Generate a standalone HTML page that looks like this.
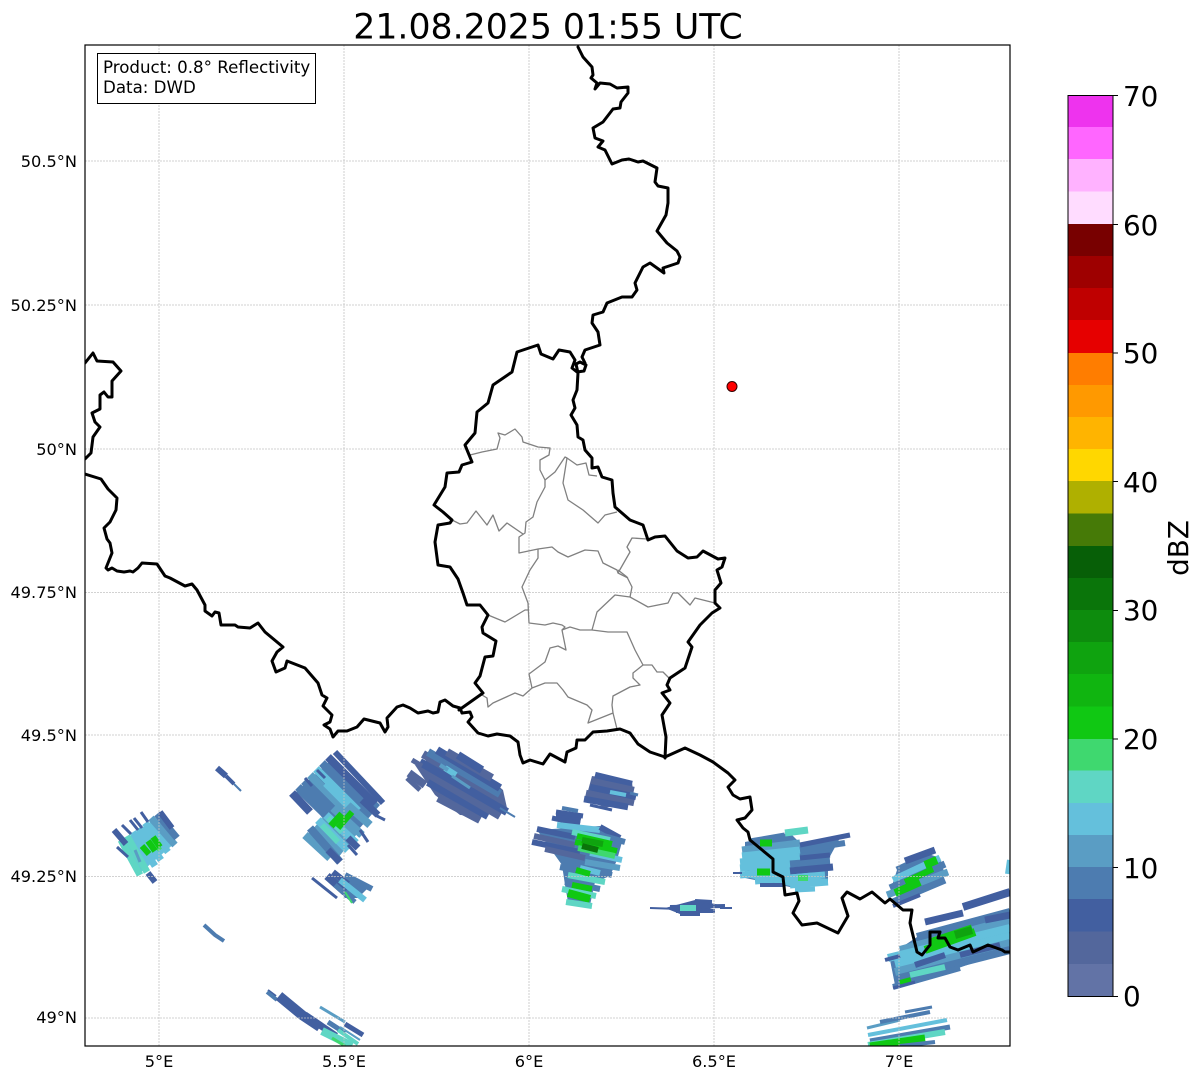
<!DOCTYPE html>
<html><head><meta charset="utf-8"><title>Radar</title>
<style>
html,body{margin:0;padding:0;background:#fff;width:1202px;height:1081px;overflow:hidden}
svg{display:block;position:absolute;left:0;top:0}
text{font-family:"DejaVu Sans","Liberation Sans",sans-serif;fill:#000}
.g{stroke:#c4c4c4;stroke-width:.8;stroke-dasharray:2 1;fill:none}
.b{stroke:#000;stroke-width:3;fill:none;stroke-linejoin:round;stroke-linecap:round}
.r{stroke:#808080;stroke-width:1.3;fill:none;stroke-linejoin:round}
.t{font-size:16.2px}
.cb{font-size:27.8px}
.c1{stroke:#53679c}.c2{stroke:#425fa0}.c3{stroke:#4d7cb0}.c4{stroke:#5a9dc4}.c5{stroke:#64c0dc}.c6{stroke:#5fd6c4}.c7{stroke:#3fd86f}.c8{stroke:#10c813}.c9{stroke:#0fa30f}.c10{stroke:#0a750a}
#radar path{fill:none}
</style></head><body>
<svg width="1202" height="1081" viewBox="0 0 1202 1081" xmlns="http://www.w3.org/2000/svg">
<defs><clipPath id="ax"><rect x="85" y="45" width="925" height="1001"/></clipPath></defs>
<rect width="1202" height="1081" fill="#fff"/>
<g clip-path="url(#ax)">
<g id="radar">
<!-- base fills -->
<polygon fill="#64c0dc" points="122,842 153,820 175,843 140,873"/>
<polygon fill="#4d7cb0" points="296,792 333,758 380,805 345,845 320,815"/>
<polygon fill="#5a9dc4" points="305,838 325,815 360,830 338,858"/>
<polygon fill="#4d7cb0" points="330,878 345,876 368,888 358,898 345,898"/>
<polygon fill="#53679c" points="415,765 445,752 478,768 503,790 507,808 480,816 460,815 435,795"/>
<polygon fill="#53679c" points="592,776 632,782 634,800 605,808 586,798"/>
<polygon fill="#425fa0" points="556,812 582,815 580,823 556,820"/>
<polygon fill="#4d7cb0" points="537,830 600,826 622,842 617,860 610,876 595,882 590,905 568,902 565,885 562,865"/>
<polygon fill="#425fa0" points="665,908 695,900 720,905 700,913 680,914"/>
<polygon fill="#4d7cb0" points="745,842 790,833 802,845 840,838 828,860 828,882 795,888 745,878"/>
<polygon fill="#64c0dc" points="748,850 795,840 800,860 822,880 795,887 750,878"/>
<polygon fill="#4d7cb0" points="897,870 923,852 940,858 945,875 905,900 890,892"/>
<polygon fill="#4d7cb0" points="905,945 920,935 1010,915 1010,950 930,978 895,985 890,960"/>
<!-- A -->
<g stroke-width="7">
<path class="c6" d="M121,840L140,875M127,836L147,872"/>
<path class="c5" d="M133,832L155,866M139,828L161,860M145,823L168,852"/>
<path class="c4" d="M151,818L175,845"/>
<path class="c3" d="M157,814L177,838"/>
</g>
<path class="c7" stroke-width="5" d="M152,840L160,850"/>
<path class="c8" stroke-width="6" d="M142,846L149,854M148,841L155,851M153,837L160,847"/>
<path class="c2" stroke-width="6" d="M114,830L126,844M148,873L155,882M160,812L172,828"/>
<path class="c2" stroke-width="3" d="M122,825L131,834M130,820L138,830M134,818L142,828M141,812L148,822M117,847L128,857"/>
<path class="c4" stroke-width="3" d="M135,850L140,862"/>
<!-- B -->
<g stroke-width="8">
<path class="c2" d="M292,793L310,812"/>
<path class="c3" d="M298,787L330,818"/>
<path class="c3" d="M304,781L338,815"/>
<path class="c4" d="M310,775L350,815"/>
<path class="c5" d="M316,769L358,811"/>
<path class="c3" d="M322,763L366,807"/>
<path class="c2" d="M328,757L375,804"/>
<path class="c2" stroke-width="6" d="M335,752L383,803"/>
<path class="c4" d="M305,835L330,858"/>
<path class="c3" d="M310,828L340,862"/>
<path class="c5" d="M318,820L348,850"/>
<path class="c5" d="M326,815L356,843"/>
<path class="c4" d="M333,808L362,835"/>
<path class="c4" d="M342,800L370,825"/>
<path class="c5" d="M326,783L348,805"/>
</g>
<path class="c6" stroke-width="6" d="M322,825L338,842M328,818L342,832"/>
<path class="c8" stroke-width="7" d="M331,826L342,814"/>
<path class="c8" stroke-width="6" d="M338,828L352,812"/>
<path class="c2" stroke-width="7" d="M328,850L340,862M348,838L358,848M362,800L378,815"/>
<path class="c2" stroke-width="3" d="M305,778L312,786M317,770L325,778M375,815L385,820M360,830L368,842M348,845L357,855"/>
<!-- C D -->
<path class="c2" stroke-width="6" d="M217,768L226,776"/><path class="c2" stroke-width="4" d="M226,776L234,784"/><path class="c3" stroke-width="2" d="M234,784L241,791"/>
<path class="c3" stroke-width="4" d="M204,925L215,935L224,941"/>
<!-- E -->
<path class="c2" stroke-width="3" d="M312,878L337,898"/>
<path class="c2" stroke-width="8" d="M327,876L345,892"/>
<path class="c2" stroke-width="6" d="M333,872L348,884"/>
<path class="c3" stroke-width="6" d="M345,875L372,889"/>
<path class="c5" stroke-width="6" d="M340,880L365,900"/>
<path class="c3" stroke-width="5" d="M335,885L355,902"/>
<path class="c7" stroke-width="2" d="M345,892L352,903"/>
<!-- F -->
<path class="c2" stroke-width="2" d="M268,990L276,996"/>
<path class="c3" stroke-width="4" d="M267,992L277,1000"/>
<path class="c2" stroke-width="10" d="M279,996L302,1015L320,1027"/>
<path class="c2" stroke-width="7" d="M305,1015L336,1036"/>
<path class="c4" stroke-width="3" d="M320,1007L345,1022"/>
<path class="c2" stroke-width="5" d="M345,1024L363,1035"/>
<path class="c3" stroke-width="5" d="M328,1022L345,1033"/>
<path class="c6" stroke-width="8" d="M322,1031L352,1046"/>
<path class="c6" stroke-width="4" d="M338,1030L358,1044"/>
<path class="c7" stroke-width="3" d="M332,1038L345,1046"/>
<path class="c4" stroke-width="2" d="M340,1027L360,1040"/>
<!-- G -->
<g stroke-width="8">
<path class="c1" d="M409,773L425,785"/>
<path class="c1" d="M438,798L480,820"/>
<path class="c2" d="M428,782L488,816"/>
<path class="c1" d="M425,772L500,816"/>
<path class="c2" d="M420,762L507,812"/>
<path class="c1" d="M423,754L502,800"/>
<path class="c3" d="M428,752L500,794"/>
<path class="c2" d="M437,750L500,788"/>
<path class="c1" d="M447,752L492,778"/>
<path class="c2" d="M458,755L482,770"/>
</g>
<path class="c1" stroke-width="5" d="M407,778L420,790M412,760L422,766"/>
<path class="c3" stroke-width="2" d="M500,808L515,817"/>
<path class="c5" stroke-width="6" d="M445,768L456,775"/><path class="c4" stroke-width="3" d="M452,776L470,788"/><path class="c4" stroke-width="4" d="M440,765L448,770"/>
<!-- H -->
<g stroke-width="6.5">
<path class="c2" d="M595,775L632,784"/>
<path class="c1" d="M592,781L634,790"/>
<path class="c2" d="M590,787L636,797"/>
<path class="c1" d="M586,793L634,803"/>
<path class="c2" d="M584,799L628,807"/>
</g>
<path class="c2" stroke-width="3" d="M590,805L612,810"/>
<path class="c3" stroke-width="3" d="M630,793L638,795"/>
<path class="c5" stroke-width="4" d="M610,792L626,795"/>
<!-- I -->
<path class="c2" stroke-width="5" d="M556,812L583,816M552,818L580,824"/><path class="c3" stroke-width="4" d="M562,808L578,811"/>
<g stroke-width="6">
<path class="c5" d="M557,825L600,830"/>
<path class="c2" d="M600,827L620,838"/>
<path class="c2" d="M537,829L575,837"/>
<path class="c1" d="M534,836L575,845"/>
<path class="c2" d="M532,842L580,852"/>
<path class="c1" d="M545,849L585,858"/>
<path class="c3" d="M600,835L625,842"/>
<path class="c5" d="M590,853L622,860"/>
<path class="c4" d="M585,862L620,868"/>
<path class="c3" d="M590,870L612,875"/>
<path class="c6" d="M572,832L610,840"/>
<path class="c8" d="M577,836L612,844M575,842L617,851"/>
<path class="c7" d="M578,848L615,856"/>
<path class="c9" d="M582,840L603,844"/>
<path class="c10" d="M582,846L598,850"/>
<path class="c3" d="M560,867L580,871"/>
<path class="c5" d="M580,868L600,873"/>
<path class="c6" d="M568,875L605,882"/>
<path class="c3" d="M565,882L600,889"/>
<path class="c8" d="M572,885L592,889"/>
<path class="c6" d="M562,889L596,896"/>
<path class="c8" stroke-width="8" d="M568,893L590,899"/>
<path class="c6" d="M566,902L592,906"/>
</g>
<path class="c8" stroke-width="6" d="M576,870L590,874"/>
<!-- J -->
<g stroke-width="4">
<path class="c2" d="M670,907L725,906M676,911L715,911M695,901L712,902M680,914L700,914"/>
</g>
<path class="c2" stroke-width="2" d="M650,908L680,909M720,908L732,908"/>
<path class="c6" stroke-width="6" d="M680,908L696,908"/>
<!-- K -->
<g stroke-width="7">
<path class="c3" d="M750,842L785,836"/>
<path class="c4" d="M742,850L800,843"/>
<path class="c5" d="M742,856L800,850"/>
<path class="c5" d="M740,862L800,857"/>
<path class="c5" d="M740,868L790,864"/>
<path class="c3" d="M790,864L830,861"/>
<path class="c5" d="M740,875L790,871"/>
<path class="c2" d="M790,871L833,867"/>
<path class="c5" d="M755,881L825,875"/>
<path class="c5" d="M790,885L828,882"/>
<path class="c5" stroke-width="5" d="M795,890L815,889"/>
<path class="c6" d="M785,833L808,830"/>
<path class="c3" stroke-width="6" d="M800,850L845,843"/>
<path class="c2" stroke-width="5" d="M800,845L850,835M800,858L830,855"/>
</g>
<path class="c2" stroke-width="2" d="M733,873L742,873"/>
<path class="c2" stroke-width="4" d="M760,885L785,885"/>
<path class="c8" stroke-width="7" d="M757,872L770,872M760,843L772,843"/>
<path class="c7" stroke-width="6" d="M798,878L808,878"/>
<!-- L -->
<g stroke-width="7">
<path class="c3" d="M897,870L925,857"/>
<path class="c2" d="M905,861L935,850"/>
<path class="c5" d="M893,880L940,858"/>
<path class="c3" d="M890,888L945,864"/>
<path class="c4" d="M887,895L948,872"/>
<path class="c3" d="M893,902L945,880"/>
</g>
<path class="c2" stroke-width="4" d="M893,906L920,895"/>
<path class="c8" stroke-width="6" d="M905,882L933,869"/>
<path class="c8" stroke-width="8" d="M895,893L920,882M925,865L937,860"/>
<!-- M -->
<path class="c2" stroke-width="8" d="M963,907L1010,892"/>
<path class="c2" stroke-width="7" d="M925,922L963,913"/>
<g stroke-width="8">
<path class="c3" d="M917,937L1010,912"/>
<path class="c4" d="M900,950L1010,920"/>
<path class="c5" d="M888,958L1010,928"/>
<path class="c5" d="M895,964L1010,936"/>
<path class="c4" d="M895,972L1010,943"/>
<path class="c3" d="M900,978L1010,950"/>
<path class="c3" stroke-width="6" d="M893,987L960,968"/>
<path class="c8" d="M925,950L975,932"/>
<path class="c8" stroke-width="7" d="M930,942L972,928"/>
<path class="c9" d="M955,935L972,930"/>
<path class="c2" stroke-width="7" d="M985,920L1010,915"/>
<path class="c2" stroke-width="6" d="M915,965L945,955M960,955L1000,945"/>
<path class="c6" stroke-width="6" d="M910,975L945,967"/>
<path class="c8" stroke-width="6" d="M900,983L911,980"/>
<path class="c2" stroke-width="4" d="M885,960L900,956"/>
<path class="c2" stroke-width="3" d="M893,988L915,982"/>
</g>
<!-- N -->
<path class="c4" stroke-width="3" d="M867,1028L900,1020"/>
<path class="c3" stroke-width="4" d="M880,1022L930,1012"/>
<path class="c3" stroke-width="3" d="M905,1012L932,1007"/>
<path class="c5" stroke-width="4" d="M868,1035L947,1020"/>
<path class="c3" stroke-width="5" d="M870,1041L950,1027"/>
<path class="c6" stroke-width="6" d="M868,1045L945,1032"/>
<path class="c8" stroke-width="7" d="M870,1046L925,1038"/>
<path class="c3" stroke-width="4" d="M900,1046L935,1042"/>
<!-- O -->
<path class="c5" stroke-width="6" d="M1010,860L1008,874"/>
</g>
<!-- grid -->
<path class="g" d="M159,45V1046M344,45V1046M529,45V1046M714,45V1046M899,45V1046M85,161H1010M85,305H1010M85,449H1010M85,592.5H1010M85,735H1010M85,876.5H1010M85,1018H1010"/>
<!-- Internal lines -->
<path class="r" d="M470,455L482,452L497,449L500,438L498,433L505,435L515,429L522,437L523,442L538,447L550,448L549,455L540,460L540,470L545,480L545,487L537,502L533,517L526,522L525,533L519,537L519,553L538,549L552,547L558,552L568,557L585,550L598,551L603,563L617,570L618,573L628,578"/>
<path class="r" d="M545,480L555,472L565,457L567,458L577,465L586,463L589,475L597,476"/>
<path class="r" d="M567,458L563,483L568,500L583,510L598,523L605,515L617,512"/>
<path class="r" d="M452,520L460,524L467,523L476,511L487,525L493,515L499,531L507,523L523,534"/>
<path class="r" d="M538,549L538,558L530,570L522,587L528,603L529,623L545,625L553,623L562,625L565,627L562,630L566,650L558,646L550,648L545,662L529,674L532,688L523,696L515,693L493,703L488,707L487,698L482,695"/>
<path class="r" d="M488,615L505,622L525,610L528,610"/>
<path class="r" d="M562,630L570,627L580,630L592,630L608,632L627,632L635,650L643,665L633,673L633,678L640,685L630,687L613,696L612,705L613,713L588,723L592,710L587,705L568,697L563,690L557,683L545,683L532,688"/>
<path class="r" d="M613,713L617,729"/>
<path class="r" d="M592,630L597,612L615,595L630,597L648,607L668,603L673,593L678,593L690,605L695,598L715,603"/>
<path class="r" d="M630,597L632,587L627,577L618,570"/>
<path class="r" d="M618,573L630,552L627,547L632,538L647,539"/>
<path class="r" d="M643,665L652,665L657,672L663,672L669,678"/>
<!-- Borders -->
<path class="b" d="M85,363L93,353L97,361L113,362L121,371L112,381L112,397L108,397L104,392L100,395L100,409L92,413L95,422L100,427L93,437L91,453L85,459"/>
<path class="b" d="M85,474L101,479L108,489L117,498L116,510L110,522L104,528L107,539L110,543L112,553L106,568L108,570L112,568L117,571L124,572L130,571L133,572L138,568L142,563L157,564L165,576L170,578L185,586L192,584L197,590L205,605L205,611L212,616L215,612L219,613L221,625L230,625L235,625L238,627L250,628L258,623L265,632L283,647L277,652L272,661L276,672L285,668L287,661L305,668L318,683L322,695L327,698L323,706L332,715L330,722L324,725L330,729L333,737L338,731L347,731L357,727L364,719L372,721L380,723L385,732L388,727L387,718L397,707L403,705L410,708L418,713L428,711L433,713L438,712L440,702L445,700L453,706L460,708L462,713"/>
<path class="b" d="M459,710L483,693L475,683L480,676L485,657L493,656L496,641L483,633L482,627L488,615L480,605L467,605L463,593L458,579L450,567L438,565L435,542L438,525L450,523L452,520L443,512L434,505L445,487L447,473L459,472L462,465L472,462L465,445L475,433L477,412L488,403L493,385L512,372L517,352L538,345L541,354L553,359L559,350L570,352L575,360L572,368L577,372L584,371L586,365L580,362L576,364L578,373L577,390L573,400L575,408L571,415L577,425L578,437L583,440L585,450L592,458L592,468L598,467L602,477L612,480L613,493L615,507L630,520L643,525L648,540L655,537L665,536L677,551L688,558L697,557L703,551L718,559L725,558L722,567L717,570L721,583L715,590L715,603L720,608L712,613L700,625L688,642L692,647L685,668L670,678L667,685L670,690L662,693L670,703L662,715L666,737L665,758"/>
<path class="b" d="M462,713L470,712L472,717L468,722L478,733L488,736L497,734L510,736L518,742L520,755L523,763L530,760L543,764L550,754L565,762L567,752L576,748L577,740L585,740L593,732L607,731L620,729L630,733L638,744L650,752L665,757L685,748L700,755L713,762L728,773L735,780L728,787L733,795L740,799L750,797L752,810L745,818L737,820L743,828L748,832L750,840L773,859L773,872L783,877L785,895L797,893L799,901L793,913L802,925L817,923L838,933L848,916L842,898L847,892L860,899L872,892L885,903L890,899L903,910L912,910L910,923L917,952L922,955L930,945L930,932L940,932L938,938L945,938L950,947L958,950L970,945L973,952L988,945L1002,950L1005,952L1010,952"/>
<path class="b" d="M578,47L583,57L592,67L593,75L591,78L597,83L595,89L600,83L610,84L617,88L628,87L628,93L621,102L620,108L613,109L603,122L593,128L595,138L603,141L598,147L605,150L612,164L622,160L629,159L638,162L643,161L657,168L655,182L658,186L668,188L668,203L666,215L657,231L667,243L677,251L680,257L678,263L663,268L664,273L650,263L643,267L635,283L637,290L632,297L622,297L607,303L603,312L593,315L592,323L598,332L600,345L585,350L582,357L585,363"/>
<circle cx="732" cy="386.5" r="5" fill="#ff0000" stroke="#300" stroke-width="1"/>
</g>
<rect x="85" y="45" width="925" height="1001" fill="none" stroke="#000" stroke-width="1.2"/>
<rect x="97.5" y="53.5" width="218" height="50" fill="#fff" stroke="#000" stroke-width="1"/>
<text x="103" y="73" font-size="16.67">Product: 0.8° Reflectivity</text>
<text x="103" y="93" font-size="16.67">Data: DWD</text>
<text x="548" y="38.5" font-size="34.7" text-anchor="middle">21.08.2025 01:55 UTC</text>
<g class="t" text-anchor="end">
<text x="77" y="167">50.5°N</text>
<text x="77" y="311">50.25°N</text>
<text x="77" y="455">50°N</text>
<text x="77" y="598">49.75°N</text>
<text x="77" y="741">49.5°N</text>
<text x="77" y="882">49.25°N</text>
<text x="77" y="1023">49°N</text>
</g>
<g class="t" text-anchor="middle">
<text x="159" y="1067">5°E</text>
<text x="344" y="1067">5.5°E</text>
<text x="529" y="1067">6°E</text>
<text x="714" y="1067">6.5°E</text>
<text x="899" y="1067">7°E</text>
</g>
<g shape-rendering="crispEdges">
<rect x="1068" y="95" width="45" height="32.5" fill="#ee33ee"/>
<rect x="1068" y="127" width="45" height="32.5" fill="#ff66ff"/>
<rect x="1068" y="159" width="45" height="32.5" fill="#ffb2ff"/>
<rect x="1068" y="191.5" width="45" height="33" fill="#ffdcff"/>
<rect x="1068" y="224" width="45" height="32.5" fill="#780000"/>
<rect x="1068" y="256" width="45" height="32.5" fill="#9e0000"/>
<rect x="1068" y="288" width="45" height="32.5" fill="#bf0000"/>
<rect x="1068" y="320" width="45" height="33" fill="#e60000"/>
<rect x="1068" y="353" width="45" height="32.5" fill="#ff7d00"/>
<rect x="1068" y="385" width="45" height="32.5" fill="#ff9900"/>
<rect x="1068" y="417" width="45" height="32.5" fill="#ffb400"/>
<rect x="1068" y="449" width="45" height="32.5" fill="#ffd700"/>
<rect x="1068" y="481" width="45" height="33" fill="#afb000"/>
<rect x="1068" y="513.5" width="45" height="33" fill="#467a07"/>
<rect x="1068" y="546" width="45" height="32.5" fill="#075f07"/>
<rect x="1068" y="578" width="45" height="32.5" fill="#0a750a"/>
<rect x="1068" y="610" width="45" height="32.5" fill="#0d8c0d"/>
<rect x="1068" y="642" width="45" height="32.5" fill="#0fa30f"/>
<rect x="1068" y="674" width="45" height="33" fill="#10b510"/>
<rect x="1068" y="706.5" width="45" height="33" fill="#10c813"/>
<rect x="1068" y="739" width="45" height="32" fill="#3fd86f"/>
<rect x="1068" y="770.5" width="45" height="33" fill="#5fd6c4"/>
<rect x="1068" y="803" width="45" height="32" fill="#64c0dc"/>
<rect x="1068" y="835" width="45" height="32" fill="#5a9dc4"/>
<rect x="1068" y="867" width="45" height="32.5" fill="#4d7cb0"/>
<rect x="1068" y="899" width="45" height="33" fill="#425fa0"/>
<rect x="1068" y="931.5" width="45" height="32.5" fill="#53679c"/>
<rect x="1068" y="964" width="45" height="32" fill="#6273a6"/>
</g>
<rect x="1068" y="95.5" width="45" height="901" fill="none" stroke="#000" stroke-width="1"/>
<path d="M1113,95.5h5M1113,224.5h5M1113,353h5M1113,481.5h5M1113,610.5h5M1113,739h5M1113,867.5h5M1113,996.5h5" stroke="#000" stroke-width="1" fill="none"/>
<g class="cb">
<text x="1123" y="106">70</text>
<text x="1123" y="235">60</text>
<text x="1123" y="363">50</text>
<text x="1123" y="492">40</text>
<text x="1123" y="620">30</text>
<text x="1123" y="749">20</text>
<text x="1123" y="878">10</text>
<text x="1123" y="1006">0</text>
</g>
<text class="cb" transform="translate(1188,548) rotate(-90)" text-anchor="middle">dBZ</text>
</svg>
</body></html>
